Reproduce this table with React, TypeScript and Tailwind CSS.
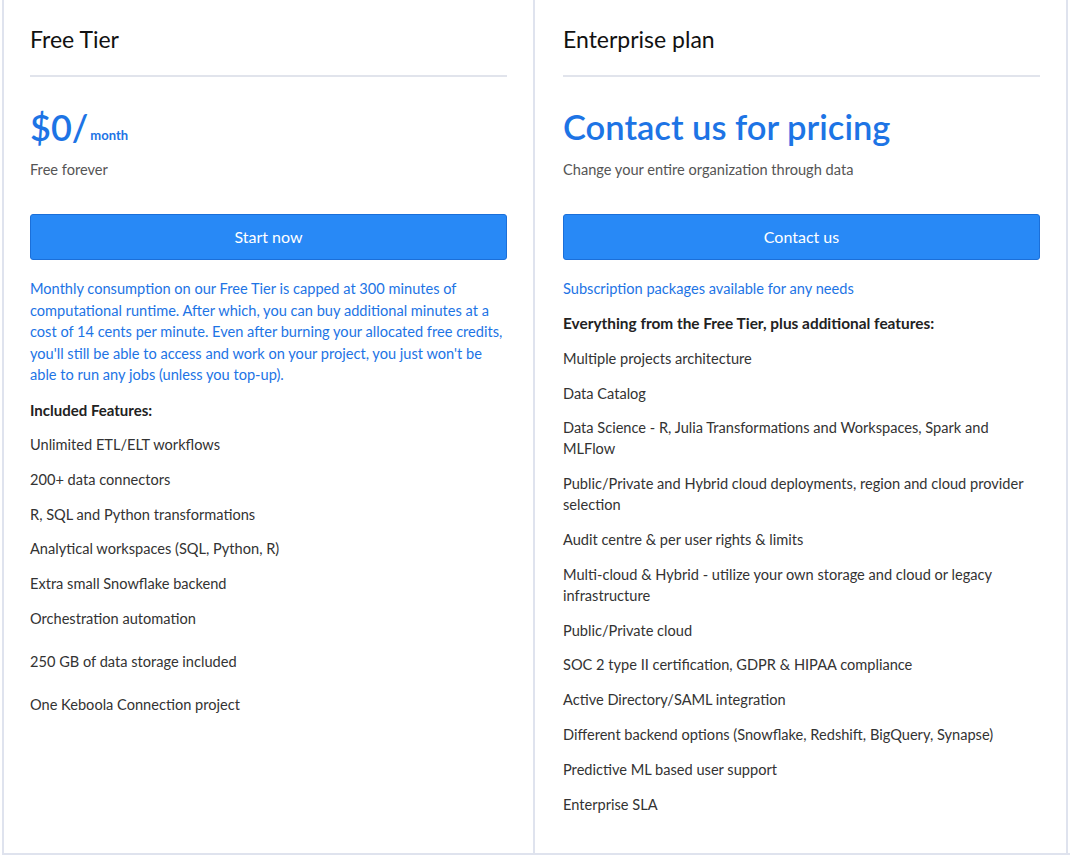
const freeFeatures = [
  "Unlimited ETL/ELT workflows",
  "200+ data connectors",
  "R, SQL and Python transformations",
  "Analytical workspaces (SQL, Python, R)",
  "Extra small Snowflake backend",
  "Orchestration automation",
];

const enterpriseFeatures = [
  "Multiple projects architecture",
  "Data Catalog",
  "Data Science - R, Julia Transformations and Workspaces, Spark and MLFlow",
  "Public/Private and Hybrid cloud deployments, region and cloud provider selection",
  "Audit centre & per user rights & limits",
  "Multi-cloud & Hybrid - utilize your own storage and cloud or legacy infrastructure",
  "Public/Private cloud",
  "SOC 2 type II certification, GDPR & HIPAA compliance",
  "Active Directory/SAML integration",
  "Different backend options (Snowflake, Redshift, BigQuery, Synapse)",
  "Predictive ML based user support",
  "Enterprise SLA",
];

function PlanHeader({ title }: { title: string }) {
  return (
    <div className="pt-[24px]">
      <h2 className="text-[23px] leading-[30px] text-[#111]">{title}</h2>
      <div className="mt-[21px] h-[2px] bg-[#e1e4ec]" />
    </div>
  );
}

function CtaButton({ label }: { label: string }) {
  return (
    <button className="mt-[34px] h-[46px] w-full rounded-[3px] border border-[#1b6fd9] bg-[#2889f6] text-[16px] text-white">
      {label}
    </button>
  );
}

export default function App() {
  return (
    <div
      className="w-[1070px] h-[857px] bg-white pl-[2px] overflow-hidden"
      style={{ fontFamily: "Lato, 'Noto Sans', sans-serif" }}
    >
      <div className="flex h-[855px] border-b-2 border-[#dfe3ee]">
        {/* Free tier */}
        <div className="w-[533px] border-l-2 border-r-2 border-[#dfe3ee] pl-[26px] pr-[26px]">
          <PlanHeader title="Free Tier" />
          <div className="mt-[28px] flex items-end text-[#1d74e5] leading-[44px]">
            <span className="text-[36px] font-semibold">$0/</span>
            <span className="ml-[2px] mb-[4px] text-[13px] font-bold leading-[20px]">month</span>
          </div>
          <p className="mt-[11px] text-[14.6px] leading-[20px] text-[#555]">Free forever</p>
          <CtaButton label="Start now" />
          <p className="mt-[18px] text-[14.6px] leading-[21.5px] text-[#1d74e5]">
            Monthly consumption on our Free Tier is capped at 300 minutes of computational runtime. After which, you
            can buy additional minutes at a cost of 14 cents per minute. Even after burning your allocated free
            credits, you'll still be able to access and work on your project, you just won't be able to run any jobs
            (unless you top-up).
          </p>
          <p className="mt-[14px] text-[15px] leading-[21px] font-bold text-[#222]">Included Features:</p>
          {freeFeatures.map((f) => (
            <p key={f} className="mt-[13.7px] text-[14.6px] leading-[21px] text-[#333]">
              {f}
            </p>
          ))}
          <p className="mt-[22px] text-[14.6px] leading-[21px] text-[#333]">250 GB of data storage included</p>
          <p className="mt-[22px] text-[14.6px] leading-[21px] text-[#333]">One Keboola Connection project</p>
        </div>

        {/* Enterprise */}
        <div className="w-[533px] border-r-2 border-[#dfe3ee] pl-[28px] pr-[26px]">
          <PlanHeader title="Enterprise plan" />
          <h3 className="mt-[28px] text-[34.5px] leading-[44px] font-semibold text-[#1d74e5]">Contact us for pricing</h3>
          <p className="mt-[11px] text-[14.6px] leading-[20px] text-[#555]">Change your entire organization through data</p>
          <CtaButton label="Contact us" />
          <p className="mt-[18px] text-[14.6px] leading-[21.5px] text-[#1d74e5]">Subscription packages available for any needs</p>
          <p className="mt-[13.5px] text-[15.4px] leading-[21px] font-bold text-[#222]">
            Everything from the Free Tier, plus additional features:
          </p>
          {enterpriseFeatures.map((f) => (
            <p key={f} className="mt-[13.8px] text-[14.6px] leading-[21px] text-[#333]">
              {f}
            </p>
          ))}
        </div>
      </div>
    </div>
  );
}
